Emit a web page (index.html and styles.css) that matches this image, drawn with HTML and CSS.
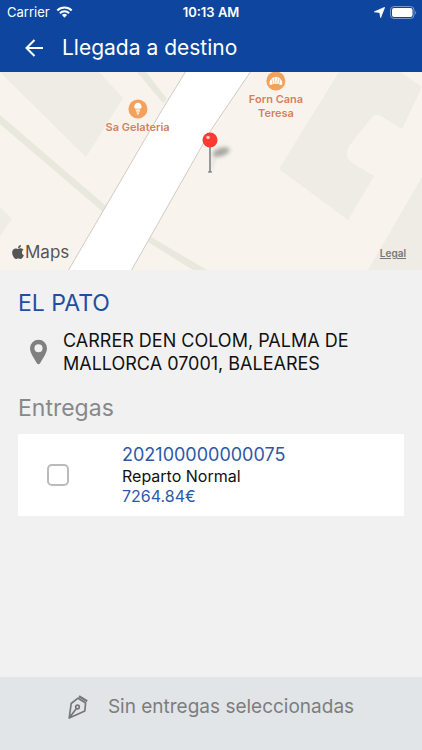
FILE: index.html
```html
<!DOCTYPE html>
<html lang="es">
<head>
    <meta charset="UTF-8">
    <meta name="viewport" content="width=device-width, initial-scale=1.0">
    <title>Llegada a destino</title>
    <link rel="stylesheet" href="styles.css">
</head>
<body>
    <header class="header">
        <div class="status-bar">
            <div class="status-left">
                <span>Carrier</span>
                <svg class="wifi" viewBox="0 0 18 13" aria-hidden="true">
                    <path d="M1.2 4.8 A11 11 0 0 1 16.8 4.8" />
                    <path d="M4 7.8 A7 7 0 0 1 14 7.8" />
                    <path class="wifi-dot" d="M9 12.6 L6.2 9.8 A4 4 0 0 1 11.8 9.8 Z" />
                </svg>
            </div>
            <span class="clock">10:13 AM</span>
            <div class="status-right">
                <svg class="location" viewBox="0 0 10 10" aria-hidden="true">
                    <path d="M9.6 .4 L6 9.6 L5.3 4.9 L.4 4.4 Z" />
                </svg>
                <svg class="battery" viewBox="0 0 27 13" aria-hidden="true">
                    <rect class="battery-case" x=".5" y=".5" width="23.5" height="12" rx="3.5" />
                    <rect x="2" y="2" width="20.5" height="9" rx="2" />
                    <path class="battery-tip" d="M25.2 4.5 Q27 6.5 25.2 8.5 Z" />
                </svg>
            </div>
        </div>
        <div class="title-bar">
            <button class="back" type="button" aria-label="Volver">
                <svg viewBox="0 0 18 18" aria-hidden="true">
                    <path d="M9.5 1 L1.5 9 L9.5 17 M1.5 9 H18" />
                </svg>
            </button>
            <h1>Llegada a destino</h1>
        </div>
    </header>

    <section class="map" aria-label="Mapa">
        <svg class="map-canvas" viewBox="0 0 422 198" preserveAspectRatio="xMidYMid slice" aria-hidden="true">
            <defs>
                <filter id="blur" x="-50%" y="-50%" width="200%" height="200%">
                    <feGaussianBlur stdDeviation="2" />
                </filter>
            </defs>
            <rect width="422" height="198" fill="#f8f4ed" />
            <!-- edificios -->
            <g fill="#efebe5">
                <path d="M0 0 H99 L123 26 L86 85 L2 2 Z" />
                <path d="M0 135 L12 147 L0 164 Z" />
                <path d="M339 0 H400 L422 15 L402 57 L381 44 Q377 41 373 44 L349 74 Q343 83 352 91 L374 104 L348 148 L279 97 Z" />
                <path d="M422 105 V198 H368 Z" />
            </g>
            <!-- caminos -->
            <g fill="#e8e8dc">
                <path d="M0 43 L106 134 L103 140 L0 52 Z" />
                <path d="M137 0 H146 L167 27 L163 31 Z" />
                <path d="M151 165 L207 198 H193 L148 170 Z" />
            </g>
            <!-- calle -->
            <path d="M186 -1 L162 38 L68 199 H131 L211 58 L251 -1 Z" fill="#fff" stroke="#d0cac5" />
            <!-- chincheta -->
            <path d="M211 97 L215 84" stroke="#777" stroke-width="2" opacity=".25" filter="url(#blur)" />
            <ellipse cx="221" cy="80" rx="9" ry="4" fill="#555" opacity=".5" transform="rotate(-18 221 80)" filter="url(#blur)" />
            <path d="M210 75 V100" stroke="#999" stroke-width="2" />
            <path d="M208 100 H212" stroke="#666" />
            <circle cx="210" cy="68" r="7.5" fill="#ff3831" />
            <circle cx="208" cy="65.5" r="1.8" fill="#ffc9c5" />
        </svg>

        <div class="place place-gelateria">
            <svg viewBox="0 0 20 20" aria-hidden="true">
                <circle cx="10" cy="10" r="9.5" fill="#f2a25d" />
                <path d="M6.3 8.5 A3.7 4.8 0 0 1 13.7 8.5 Q12.5 10.3 10 9.5 Q7.5 10.3 6.3 8.5 Z" fill="#fff" />
                <path d="M7.5 10.5 H12.5 L10 16.5 Z" fill="#fff" />
                <path d="M8.2 11 L11 14 M11.8 11 L9 14" stroke="#f2a25d" stroke-width=".5" />
            </svg>
            <span>Sa Gelateria</span>
        </div>
        <div class="place place-forn">
            <svg viewBox="0 0 20 20" aria-hidden="true">
                <circle cx="10" cy="10" r="9.5" fill="#f2a25d" />
                <path d="M3.5 13.5 Q3.5 9 6 7.5 Q7.2 6 8.5 6.3 Q10 5 11.5 6.3 Q12.8 6 14 7.5 Q16.5 9 16.5 13.5 Q14.5 14.5 13 13 H7 Q5.5 14.5 3.5 13.5 Z" fill="#fff" />
                <path d="M6 8 L7 13 M8.5 6.5 L9 13 M11.5 6.5 L11 13 M14 8 L13 13" stroke="#f2a25d" stroke-width=".6" />
            </svg>
            <span>Forn Cana<br>Teresa</span>
        </div>

        <div class="map-brand">
            <svg viewBox="0 0 384 512" aria-hidden="true">
                <path d="M318.7 268.7c-.2-36.7 16.4-64.4 50-84.8-18.8-26.9-47.2-41.7-84.7-44.6-35.5-2.8-74.3 20.7-88.5 20.7-15 0-49.4-19.7-76.4-19.7C63.3 141.2 4 184.8 4 273.5q0 39.3 14.4 81.2c12.8 36.7 59 126.7 107.2 125.2 25.2-.6 43-17.9 75.8-17.9 31.8 0 48.3 17.9 76.4 17.9 48.6-.7 90.4-82.5 102.6-119.3-65.2-30.7-61.7-90-61.7-91.9zm-56.6-164.2c27.3-32.4 24.8-61.9 24-72.5-24.1 1.4-52 16.4-67.9 34.9-17.5 19.8-27.8 44.3-25.6 71.9 26.1 2 49.9-11.4 69.5-34.3z" />
            </svg>
            <span>Maps</span>
        </div>
        <a class="legal" href="#">Legal</a>
    </section>

    <main class="content">
        <h2 class="customer">EL PATO</h2>
        <div class="address">
            <svg viewBox="0 0 18 26" aria-hidden="true">
                <path fill-rule="evenodd" d="M9 0 A9 9 0 0 0 0 9 C0 14 4 19 7.3 25 Q9 27 10.7 25 C14 19 18 14 18 9 A9 9 0 0 0 9 0 Z M9 4.7 A4.3 4.3 0 1 1 9 13.3 A4.3 4.3 0 1 1 9 4.7 Z" />
            </svg>
            <p>CARRER DEN COLOM, PALMA DE MALLORCA 07001, BALEARES</p>
        </div>

        <h2 class="section-title">Entregas</h2>
        <label class="delivery" for="entrega1">
            <input type="checkbox" id="entrega1">
            <span class="delivery-info">
                <span class="delivery-number">202100000000075</span>
                <span class="delivery-type">Reparto Normal</span>
                <span class="delivery-price">7264.84€</span>
            </span>
        </label>
    </main>

    <button class="sign-button" type="button">
        <svg viewBox="0 0 20 24" aria-hidden="true">
            <path d="M1.2 23 L3.2 8.5 L10 3.2 L17.6 8 L16.8 16 Z M1.2 23 L8.4 13.5" />
            <circle cx="9.5" cy="12" r="1.8" />
            <path class="nib-top" d="M11 1.2 L19.2 6.2" />
        </svg>
        <span>Sin entregas seleccionadas</span>
    </button>
</body>
</html>
```

FILE: styles.css
```css
* {
    box-sizing: border-box;
}

body {
    display: flex;
    flex-direction: column;
    min-height: 100vh;
    margin: 0;
    font-family: Inter, "Liberation Sans", Arial, sans-serif;
    background-color: #f1f1f1;
    color: #111;
}

h1, h2, p {
    margin: 0;
    font-weight: 400;
}

svg {
    display: block;
    flex-shrink: 0;
}

/* cabecera */
.header {
    background-color: #0e469f;
    color: white;
}

.status-bar {
    display: grid;
    grid-template-columns: 1fr auto 1fr;
    align-items: center;
    height: 24px;
    padding: 0 7px;
    font-size: 13px;
}

.status-left, .status-right {
    display: flex;
    align-items: center;
    gap: 6px;
}

.status-right {
    justify-content: flex-end;
    gap: 5px;
}

.clock {
    font-weight: 600;
}

.wifi {
    width: 17px;
    height: 12px;
    fill: none;
    stroke: white;
    stroke-width: 2.2;
}

.wifi .wifi-dot {
    fill: white;
    stroke: none;
}

.location {
    width: 11px;
    height: 11px;
    fill: white;
    stroke: white;
    stroke-width: 0.8;
    stroke-linejoin: round;
}

.battery {
    width: 27px;
    height: 13px;
    margin-right: -2px;
    fill: white;
}

.battery .battery-case {
    fill: none;
    stroke: #7896c9;
}

.battery .battery-tip {
    fill: #7896c9;
}

.title-bar {
    display: flex;
    align-items: center;
    gap: 19px;
    height: 48px;
    padding: 0 25px;
}

.title-bar h1 {
    font-size: 21px;
    line-height: 24px;
}

.back {
    padding: 0;
    border: none;
    background: none;
    cursor: pointer;
}

.back svg {
    width: 18px;
    height: 18px;
    fill: none;
    stroke: white;
    stroke-width: 2;
}

/* mapa */
.map {
    position: relative;
    height: 198px;
    overflow: hidden;
}

.map-canvas {
    width: 100%;
    height: 100%;
}

.place {
    position: absolute;
    display: flex;
    flex-direction: column;
    align-items: center;
    gap: 1px;
    transform: translateX(-50%);
    color: #d58058;
    font-size: 11px;
    font-weight: 600;
    line-height: 14px;
    text-align: center;
    white-space: nowrap;
    text-shadow: 0 0 2px white;
}

.place svg {
    width: 20px;
    height: 20px;
}

.place-gelateria {
    top: 27px;
    left: 32.6%;
}

.place-forn {
    top: -1px;
    left: 65.4%;
}

.map-brand {
    position: absolute;
    bottom: 8px;
    left: 12px;
    display: flex;
    align-items: center;
    gap: 1px;
    color: #555;
    font-size: 17px;
    line-height: 20px;
}

.map-brand svg {
    width: 12px;
    height: 16px;
    fill: #555;
}

.legal {
    position: absolute;
    right: 16px;
    bottom: 11px;
    color: #777;
    font-size: 10px;
    font-weight: 600;
    line-height: 12px;
}

/* contenido */
.content {
    flex: 1;
    padding: 19px 18px;
}

.customer, .section-title {
    font-size: 23px;
    line-height: 28px;
}

.customer {
    color: #1f4ea3;
}

.address {
    display: flex;
    align-items: center;
    gap: 16px;
    margin: 12px 0 19px;
    padding-left: 12px;
}

.address svg {
    width: 17px;
    height: 26px;
    fill: #808080;
}

.address p {
    font-size: 18px;
    line-height: 23px;
}

.section-title {
    color: #888;
}

.delivery {
    display: flex;
    align-items: center;
    gap: 53px;
    margin-top: 12px;
    padding: 10px 29px;
    background: white;
}

.delivery input {
    appearance: none;
    width: 22px;
    height: 22px;
    margin: 0;
    border: 2px solid #bbb;
    border-radius: 5px;
    background: white;
}

.delivery input:checked {
    border-color: #0e469f;
    background: #0e469f;
}

.delivery-info {
    display: flex;
    flex-direction: column;
    font-size: 16px;
    line-height: 20px;
}

.delivery-number {
    font-size: 18px;
    line-height: 22px;
}

.delivery-number, .delivery-price {
    color: #2e58a8;
}

/* pie */
.sign-button {
    display: flex;
    justify-content: center;
    gap: 20px;
    width: 100%;
    padding: 18px 10px 31px;
    border: none;
    background-color: #e1e5e8;
    color: #7d7d7d;
    font-family: inherit;
    font-size: 19px;
    line-height: 24px;
    cursor: pointer;
}

.sign-button svg {
    width: 20px;
    height: 24px;
    fill: none;
    stroke: #777;
    stroke-width: 1.7;
    stroke-linejoin: round;
}

.sign-button .nib-top {
    stroke-width: 2.2;
}
```
